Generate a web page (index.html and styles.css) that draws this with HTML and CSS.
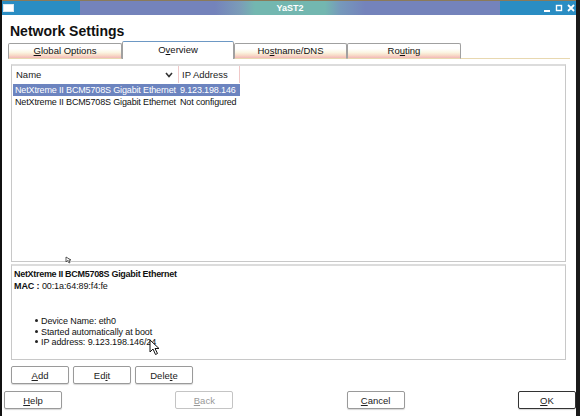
FILE: index.html
```html
<!DOCTYPE html>
<html>
<head>
<meta charset="utf-8">
<link rel="stylesheet" href="styles.css">
</head>
<body>
<div class="window">
  <div class="titlebar">
    <span class="menu-icon"></span>
    <span class="title">YaST2</span>
    <span class="controls">
      <svg width="36" height="10" viewBox="0 0 36 10">
        <rect x="4" y="7" width="6" height="2" fill="#fff"/>
        <rect x="16.5" y="2.5" width="5" height="5" fill="none" stroke="#fff" stroke-width="1.4"/>
        <path d="M28 2 L34 8 M34 2 L28 8" stroke="#fff" stroke-width="1.8"/>
      </svg>
    </span>
  </div>
  <div class="body">
    <h1 class="heading">Network Settings</h1>
    <div class="tabs">
      <div class="tab tab-global"><u>G</u>lobal Options</div>
      <div class="tab tab-active">O<u>v</u>erview</div>
      <div class="tab tab-host">Ho<u>s</u>tname/DNS</div>
      <div class="tab tab-routing">Ro<u>u</u>ting</div>
      <div class="tab-rest"></div>
    </div>
    <div class="listbox">
      <div class="list-head">
        <div class="col-name">Name <span class="chev"><svg width="8" height="6" viewBox="0 0 8 6"><path d="M1 1 L4 4.5 L7 1" fill="none" stroke="#333" stroke-width="1.6"/></svg></span></div>
        <div class="col-ip">IP Address</div>
      </div>
      <div class="row selected"><div class="col-name">NetXtreme II BCM5708S Gigabit Ethernet</div><div class="col-ip">9.123.198.146</div></div>
      <div class="row"><div class="col-name">NetXtreme II BCM5708S Gigabit Ethernet</div><div class="col-ip">Not configured</div></div>
    </div>
    <div class="details">
      <div class="d-title">NetXtreme II BCM5708S Gigabit Ethernet</div>
      <div class="d-mac"><b>MAC :</b> 00:1a:64:89:f4:fe</div>
      <ul class="d-list">
        <li>Device Name: eth0</li>
        <li>Started automatically at boot</li>
        <li>IP address: 9.123.198.146/24</li>
      </ul>
    </div>
    <div class="actions">
      <button class="btn"><u>A</u>dd</button>
      <button class="btn">Ed<u>i</u>t</button>
      <button class="btn">Dele<u>t</u>e</button>
    </div>
  </div>
  <div class="footer">
    <button class="btn"><u>H</u>elp</button>
    <button class="btn disabled"><u>B</u>ack</button>
    <button class="btn"><u>C</u>ancel</button>
    <button class="btn default"><u>O</u>K</button>
  </div>
  <svg class="cursor cursor-small" width="8" height="8" viewBox="0 0 8 8"><path d="M1 1 L1 6 L2.5 4.5 L4 7 L5 6.5 L3.8 4 L6 4 Z" fill="#fff" stroke="#333" stroke-width="0.8"/></svg>
  <svg class="cursor cursor-big" width="12" height="17" viewBox="0 0 12 17"><path d="M1 1 L1 13 L4 10 L6.5 15.5 L8.5 14.5 L6 9.5 L10 9.5 Z" fill="#fff" stroke="#111" stroke-width="1"/></svg>
</div>
</body>
</html>
```
FILE: styles.css
```css
* { box-sizing: border-box; }
html, body { margin: 0; padding: 0; background: #fff; }
body { font-family: "Liberation Sans", Arial, sans-serif; font-size: 9px; color: #111; }

.window {
  position: relative;
  width: 580px;
  height: 416px;
  display: flex;
  flex-direction: column;
  border-left: 2px solid #111;
  border-right: 4px solid #1a1a1a;
  background: #fff;
  overflow: hidden;
}

.titlebar {
  height: 15px;
  margin-left: -2px;
  margin-right: -4px;
  border-top: 1px solid #8a7a5a;
  background: linear-gradient(to right,
    #2a8dc3 0px, #2a8dc3 80px,
    #7483bb 80px, #7483bb 215px,
    #7b9cb8 240px, #73b7b0 255px, #73b7b0 325px,
    #7699bb 340px, #7483bb 365px, #7483bb 500px,
    #2a8dc3 500px, #2a8dc3 580px);
  display: flex;
  align-items: center;
  position: relative;
}
.menu-icon {
  width: 11px; height: 8px;
  margin-left: 3px;
  background: #fff;
  border: 1px solid #dfe8ef;
}
.title {
  position: absolute;
  left: 0; right: 0;
  text-align: center;
  color: #fff;
  font-weight: bold;
  font-size: 9px;
}
.controls { margin-left: auto; margin-right: 4px; display: flex; }

.body {
  flex: 1;
  display: flex;
  flex-direction: column;
  padding: 0 4px 0 6px;
}
.heading {
  font-family: "Liberation Sans", Arial, sans-serif;
  font-size: 14px;
  font-weight: bold;
  margin: 6px 0 0 2px;
  height: 20px;
  line-height: 20px;
  color: #111;
}

.tabs {
  display: flex;
  align-items: flex-end;
  height: 18px;
}
.tab {
  height: 16px;
  border: 1px solid #a0a0a0;
  border-radius: 2px 2px 0 0;
  text-align: center;
  line-height: 14px;
  font-size: 9.5px;
  background: linear-gradient(to bottom, #ffffff 0%, #ffffff 35%, #fbf5e2 60%, #f8dcc8 80%, #f3b8b8 100%);
  border-bottom: 1px solid #e8d8b0;
}
.tab-global { width: 114px; }
.tab-active {
  width: 112px;
  height: 18px;
  background: #fff;
  border-top: 1px solid #6d98c4;
  border-bottom: none;
  line-height: 15px;
}
.tab-host { width: 113px; }
.tab-routing { width: 114px; }
.tab-rest { flex: 1; border-bottom: 1px solid #e8d8b0; height: 1px; margin-right: 2px; }

.listbox {
  margin: 5px 6px 0 3px;
  height: 198px;
  border: 1px solid #c8c8c8;
  border-top: 2px solid #dcdcdc;
  padding: 0 1px;
}
.list-head {
  display: flex;
  height: 17px;
  line-height: 17px;
  font-size: 9.5px;
  color: #222;
  margin-bottom: 1px;
}
.list-head .col-name { padding-left: 3px; width: 165px; position: relative; }
.list-head .col-ip { width: 62px; padding-left: 3px; border-left: 1px solid #f0c8c8; border-right: 1px solid #f0c8c8; }
.chev { position: absolute; right: 5px; top: 0; }
.row { display: flex; height: 12px; line-height: 12px; width: 227px; font-size: 9px; letter-spacing: -0.15px; }
.row .col-name { width: 167px; padding-left: 2px; white-space: nowrap; }
.row .col-ip { padding-left: 0; white-space: nowrap; }
.row.selected { background: #6c84bf; color: #fff; }

.details {
  margin: 2px 6px 0 3px;
  height: 96px;
  border: 1px solid #c8c8c8;
  border-top: 2px solid #dcdcdc;
  padding: 3px 2px;
  font-size: 9px;
  line-height: 11px;
  letter-spacing: -0.1px;
}
.d-title { font-weight: bold; letter-spacing: -0.3px; }
.d-mac { margin-top: 1px; }
.d-list {
  margin: 24px 0 0 0;
  padding-left: 21px;
  list-style: none;
  line-height: 10.5px;
}
.d-list li::before {
  content: "";
  display: inline-block;
  width: 3px; height: 3px;
  border-radius: 50%;
  background: #222;
  margin-right: 3px;
  vertical-align: middle;
  position: relative;
  top: -1px;
}

.actions {
  display: flex;
  gap: 4px;
  margin: 6px 0 0 3px;
}
.btn {
  font-family: "Liberation Sans", Arial, sans-serif;
  font-size: 9.5px;
  color: #222;
  width: 58px;
  height: 18px;
  padding: 0;
  background: #fff;
  border: 1px solid #9a9a9a;
  border-radius: 2px;
  box-shadow: 0 1px 1px #d8d8d8;
}
.btn.disabled { color: #999; border-color: #c4c4c4; box-shadow: none; }
.btn.default { border-color: #333; }

.footer {
  display: flex;
  justify-content: space-between;
  height: 25px;
  padding: 0 0 7px 2px;
  align-items: flex-start;
}

.cursor { position: absolute; }
.cursor-small { left: 63px; top: 256px; }
.cursor-big { left: 147px; top: 339px; }
```
